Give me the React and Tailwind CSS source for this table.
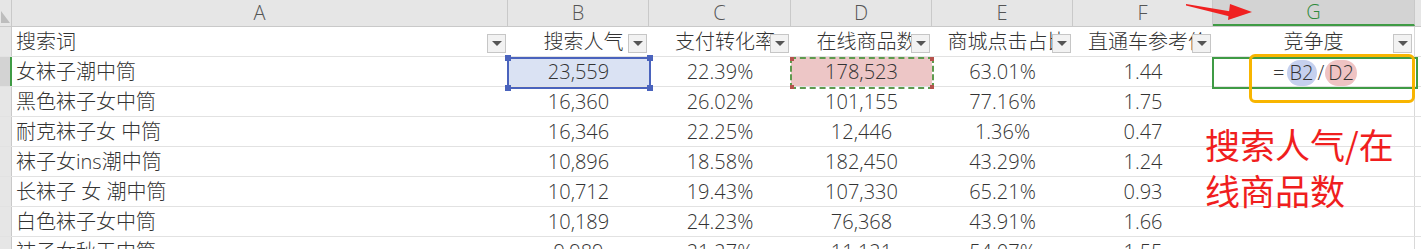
import React from 'react';

const cols = [
  { key: 'A', w: 'w-[496px]' },
  { key: 'B', w: 'w-[141px]' },
  { key: 'C', w: 'w-[142px]' },
  { key: 'D', w: 'w-[141px]' },
  { key: 'E', w: 'w-[141px]' },
  { key: 'F', w: 'w-[140px]' },
  { key: 'G', w: 'w-[202px]' },
];

const heads = ['搜索词', '搜索人气', '支付转化率', '在线商品数', '商城点击占比', '直通车参考价', '竞争度'];

const rows = [
  ['女袜子潮中筒', '23,559', '22.39%', '178,523', '63.01%', '1.44'],
  ['黑色袜子女中筒', '16,360', '26.02%', '101,155', '77.16%', '1.75'],
  ['耐克袜子女 中筒', '16,346', '22.25%', '12,446', '1.36%', '0.47'],
  ['袜子女ins潮中筒', '10,896', '18.58%', '182,450', '43.29%', '1.24'],
  ['长袜子 女 潮中筒', '10,712', '19.43%', '107,330', '65.21%', '0.93'],
  ['白色袜子女中筒', '10,189', '24.23%', '76,368', '43.91%', '1.66'],
  ['袜子女秋天中筒', '9,989', '21.27%', '11,121', '54.07%', '1.55'],
];

const font = { fontFamily: '"Segoe UI", "Open Sans", "Noto Sans CJK SC", sans-serif' };

const Dropdown = () => (
  <div className="absolute right-[2px] top-[7px] w-[19px] h-[19px] bg-[#f2f2f2] border border-[#c6c6c6] flex items-center justify-center">
    <div className="w-0 h-0 border-l-[5px] border-r-[5px] border-t-[5px] border-l-transparent border-r-transparent border-t-[#555]" />
  </div>
);

const Handle = ({ className }) => (
  <div className={`absolute w-[6px] h-[6px] bg-[#4a63bd] ${className}`} />
);

const Corner = ({ className }) => (
  <div className={`absolute w-[4px] h-[4px] bg-[#b5524c] ${className}`} />
);

export default function App() {
  return (
    <div className="relative w-[1421px] h-[249px] overflow-hidden bg-white text-[#333]" style={font}>
      {/* column header */}
      <div className="flex h-[27px] bg-[#e6e6e6] border-b border-[#c9c9c9]">
        <div className="w-[12px] shrink-0 border-r border-[#c9c9c9] relative overflow-hidden">
          <div className="absolute right-[1px] bottom-[3px] w-0 h-0 border-l-[9px] border-t-[12px] border-l-transparent border-t-[#bdbdbd] rotate-180" />
        </div>
        {cols.map((c) =>
          c.key === 'G' ? (
            <div key={c.key} className={`${c.w} shrink-0 bg-[#d3d3d3] border-r border-[#c9c9c9] border-b-2 border-b-[#3f9b45] flex items-center justify-center text-[20px] leading-none text-[#2f8a3b] font-light`}>
              {c.key}
            </div>
          ) : (
            <div key={c.key} className={`${c.w} shrink-0 border-r border-[#c9c9c9] flex items-center justify-center text-[20px] leading-none text-[#555] font-light`}>
              {c.key}
            </div>
          )
        )}
        <div className="flex-1" />
      </div>

      {/* table header row */}
      <div className="flex h-[30px] border-b border-[#e2e2e2]">
        <div className="w-[12px] shrink-0 bg-[#e6e6e6] border-r border-[#c9c9c9]" />
        {cols.map((c, i) => (
          <div
            key={c.key}
            className={`${c.w} shrink-0 relative overflow-hidden flex items-center text-[20px] font-light whitespace-nowrap ${i === 0 ? 'pl-[4px]' : 'justify-center'} ${i === 6 ? 'border-r border-[#d9d9d9]' : ''}`}
          >
            <span className={i > 0 && i < 6 ? 'pl-[10px]' : ''}>{heads[i]}</span>
            <Dropdown />
          </div>
        ))}
        <div className="flex-1" />
      </div>

      {/* data rows */}
      {rows.map((r, ri) => (
        <div key={ri} className="flex h-[30px] border-b border-[#e2e2e2]">
          <div className={`w-[12px] shrink-0 border-r ${ri === 0 ? 'bg-[#d3d3d3] border-r-2 border-r-[#3f9b45]' : 'bg-[#e6e6e6] border-[#c9c9c9]'}`} />
          {cols.map((c, ci) => {
            const v = ci < 6 ? r[ci] : '';
            let extra = '';
            if (ri === 0 && ci === 1) extra = 'bg-[#dae2f3]';
            if (ri === 0 && ci === 3) extra = 'bg-[#edc6c6]';
            return (
              <div
                key={c.key}
                className={`${c.w} shrink-0 flex items-center text-[20px] font-light whitespace-nowrap overflow-hidden ${ci === 0 ? 'pl-[4px]' : 'justify-center'} ${ci === 6 ? 'border-r border-[#d9d9d9]' : ''} ${extra}`}
              >
                {v}
              </div>
            );
          })}
          <div className="flex-1" />
        </div>
      ))}

      {/* B2 selection */}
      <div className="absolute left-[507px] top-[57px] w-[144px] h-[32px] border-2 border-[#4a63bd]">
        <Handle className="-left-[4px] -top-[4px]" />
        <Handle className="-right-[4px] -top-[4px]" />
        <Handle className="-left-[4px] -bottom-[4px]" />
        <Handle className="-right-[4px] -bottom-[4px]" />
      </div>

      {/* D2 marching ants */}
      <div className="absolute left-[790px] top-[57px] w-[144px] h-[32px] border-2 border-dashed border-[#5e9a4e]">
        <Corner className="-left-[2px] -top-[2px]" />
        <Corner className="-right-[2px] -top-[2px]" />
        <Corner className="-left-[2px] -bottom-[2px]" />
        <Corner className="-right-[2px] -bottom-[2px]" />
      </div>

      {/* G2 active cell with formula */}
      <div className="absolute left-[1212px] top-[57px] w-[206px] h-[32px] border-2 border-[#3f9b45] flex items-center justify-center text-[20px] font-light">
        <span className="mr-[2px]">=</span>
        <span className="bg-[#c5d0ee] rounded-full px-[3px] leading-[26px]">B2</span>
        <span className="mx-[1px]">/</span>
        <span className="bg-[#efc3c3] rounded-full px-[3px] leading-[26px]">D2</span>
      </div>

      {/* orange highlight */}
      <div className="absolute left-[1249px] top-[54px] w-[166px] h-[49px] border-[3px] border-[#f8b500] rounded-[6px]" />

      {/* red arrow */}
      <svg className="absolute left-[1184px] top-[0px]" width="72" height="22" viewBox="0 0 72 22">
        <polygon points="2,4 50,12 48,17 2,5.5" fill="#f02020" />
        <polygon points="46,4 68,12 44,20" fill="#f02020" />
      </svg>

      {/* red note */}
      <div
        className="absolute left-[1205px] top-[121px] text-[35px] leading-[46px] text-[#f01e1e]"
        style={{ fontFamily: '"Noto Sans CJK SC", sans-serif' }}
      >
        <div>搜索人气/在</div>
        <div>线商品数</div>
      </div>
    </div>
  );
}
